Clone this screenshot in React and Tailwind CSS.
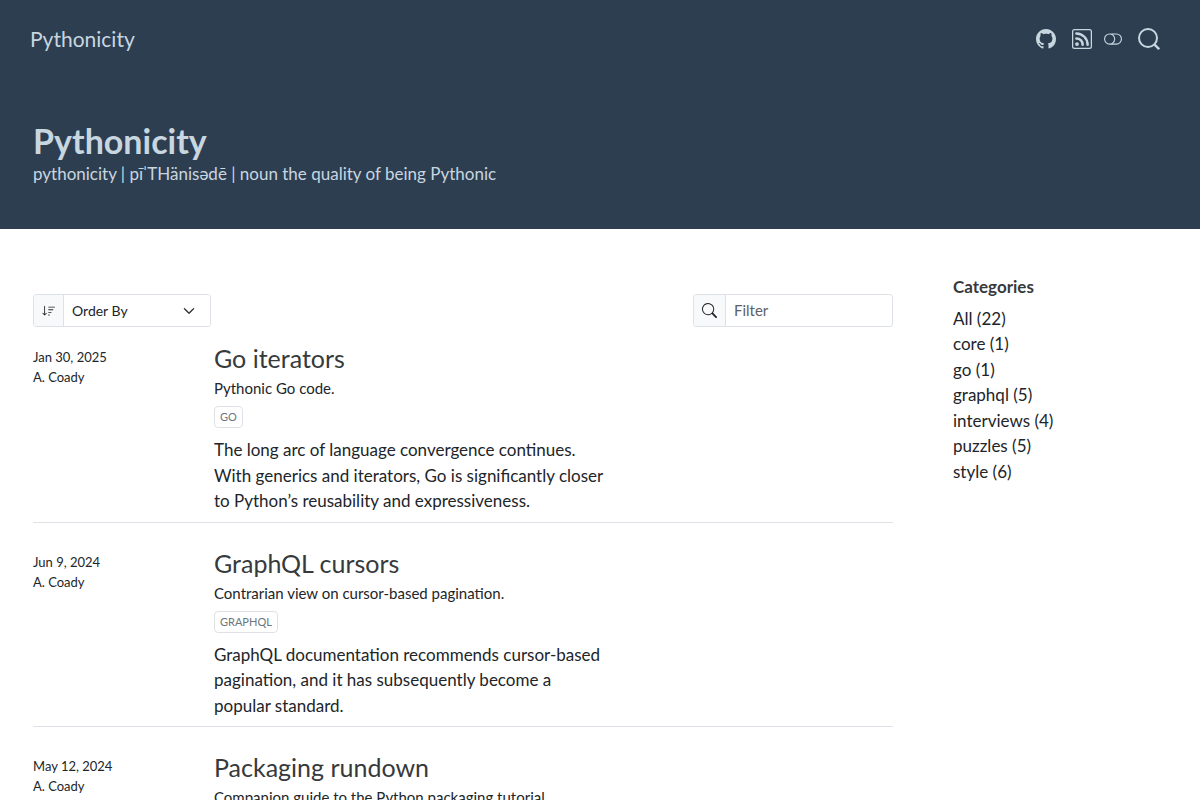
import React, { useState } from 'react';
import { BsGithub, BsToggleOff, BsSearch, BsSortDown, BsChevronDown } from 'react-icons/bs';

const posts = [
  {
    title: 'Go iterators',
    date: 'Jan 30, 2025',
    time: 20250130,
    author: 'A. Coady',
    description: 'Pythonic Go code.',
    category: 'go',
    summary:
      'The long arc of language convergence continues. With generics and iterators, Go is significantly closer to Python’s reusability and expressiveness.',
  },
  {
    title: 'GraphQL cursors',
    date: 'Jun 9, 2024',
    time: 20240609,
    author: 'A. Coady',
    description: 'Contrarian view on cursor-based pagination.',
    category: 'graphql',
    summary:
      'GraphQL documentation recommends cursor-based pagination, and it has subsequently become a popular standard.',
  },
  {
    title: 'Packaging rundown',
    date: 'May 12, 2024',
    time: 20240512,
    author: 'A. Coady',
    description: 'Companion guide to the Python packaging tutorial.',
  },
];

const categories = [
  { name: 'All', count: 22 },
  { name: 'core', count: 1 },
  { name: 'go', count: 1 },
  { name: 'graphql', count: 5 },
  { name: 'interviews', count: 4 },
  { name: 'puzzles', count: 5 },
  { name: 'style', count: 6 },
];

const Header = () => (
  <header className="bg-[#2d3e50] text-[#c8d6e0]">
    <nav className="flex h-[78px] items-center justify-between pl-[30px] pr-10">
      <a href="#" className="text-[21px] leading-8">Pythonicity</a>
      <div className="flex items-center">
        <a href="#github" aria-label="GitHub" className="mr-4">
          <BsGithub className="size-5" />
        </a>
        <a href="#rss" aria-label="RSS" className="mr-3">
          <svg viewBox="0 0 16 16" fill="currentColor" className="size-5">
            <path d="M14 1a1 1 0 0 1 1 1v12a1 1 0 0 1-1 1H2a1 1 0 0 1-1-1V2a1 1 0 0 1 1-1zM2 0a2 2 0 0 0-2 2v12a2 2 0 0 0 2 2h12a2 2 0 0 0 2-2V2a2 2 0 0 0-2-2z" />
            <path d="M5.5 12a1.5 1.5 0 1 1-3 0 1.5 1.5 0 0 1 3 0m-3-8.5a1 1 0 0 1 1-1c5.523 0 10 4.477 10 10a1 1 0 1 1-2 0 8 8 0 0 0-8-8 1 1 0 0 1-1-1m0 4a1 1 0 0 1 1-1 6 6 0 0 1 6 6 1 1 0 1 1-2 0 4 4 0 0 0-4-4 1 1 0 0 1-1-1" />
          </svg>
        </a>
        <button type="button" aria-label="Toggle dark mode" className="mr-4">
          <BsToggleOff className="size-[18px]" />
        </button>
        <button type="button" aria-label="Search">
          <svg viewBox="0 0 22 22" fill="none" stroke="currentColor" strokeWidth="2" className="size-[22px]">
            <circle cx="10" cy="10" r="9" />
            <path d="M16.3 16.3 21.2 21.2" strokeWidth="2.4" />
          </svg>
        </button>
      </div>
    </nav>
    <div className="px-[33px] pb-[43px] pt-[42px]">
      <h1 className="text-[34px] font-bold leading-[41px]">Pythonicity</h1>
      <p className="text-[17px] leading-[25px]">
        pythonicity | pīˈTHänisədē | noun the quality of being Pythonic
      </p>
    </div>
  </header>
);

const Post = ({ post }) => (
  <article className="grid grid-cols-[181px_minmax(0,390px)] border-b border-[#dee2e6] pb-2">
    <div className="pt-[3px] text-[13px] leading-5">
      <div>{post.date}</div>
      <div>{post.author}</div>
    </div>
    <div>
      <h3 className="text-[25px] leading-7 text-[#373a3c]">
        <a href="#post">{post.title}</a>
      </h3>
      <p className="mt-[5px] text-[15px] leading-[22px]">{post.description}</p>
      {post.category && (
        <button
          type="button"
          className="mt-[7px] block rounded border border-[#dee2e6] px-[5px] text-[11px] uppercase leading-5 text-[#6c757d]"
        >
          {post.category}
        </button>
      )}
      {post.summary && <p className="mt-[9px] text-[17px] leading-normal">{post.summary}</p>}
    </div>
  </article>
);

const App = () => {
  const [order, setOrder] = useState('');
  const [filter, setFilter] = useState('');

  const visible = posts.filter((p) =>
    `${p.title} ${p.description}`.toLowerCase().includes(filter.toLowerCase())
  );
  if (order === 'title') visible.sort((a, b) => a.title.localeCompare(b.title));
  if (order === 'oldest') visible.sort((a, b) => a.time - b.time);
  if (order === 'newest') visible.sort((a, b) => b.time - a.time);

  return (
    <div className="h-screen overflow-y-auto bg-white font-['Lato',sans-serif] text-[#212529] [scrollbar-width:none]">
      <Header />
      <div className="flex gap-[60px] px-[33px] pt-[45px]">
        <main className="min-w-0 flex-1 pt-5">
          <div className="flex items-center justify-between">
            <div className="flex h-[33px] w-[178px] overflow-hidden rounded-[3px] border border-[#dee2e6]">
              <label
                htmlFor="order"
                aria-label="Order By"
                className="flex w-[30px] shrink-0 items-center justify-center border-r border-[#dee2e6] bg-[#f8f9fa]"
              >
                <BsSortDown className="size-[14px]" />
              </label>
              <div className="relative flex-1">
                <select
                  id="order"
                  value={order}
                  onChange={(e) => setOrder(e.target.value)}
                  className="h-full w-full appearance-none bg-white pl-2 pr-8 text-[14px] outline-none"
                >
                  <option value="">Order By</option>
                  <option value="title">Title</option>
                  <option value="oldest">Date - Oldest</option>
                  <option value="newest">Date - Newest</option>
                </select>
                <BsChevronDown className="pointer-events-none absolute right-[15px] top-[10px] size-3 stroke-1" />
              </div>
            </div>
            <div className="flex h-[33px] w-[200px] overflow-hidden rounded-[3px] border border-[#dee2e6]">
              <label
                htmlFor="filter"
                aria-label="Filter"
                className="flex w-8 shrink-0 items-center justify-center border-r border-[#dee2e6] bg-[#f8f9fa]"
              >
                <BsSearch className="size-[15px]" />
              </label>
              <input
                id="filter"
                type="text"
                placeholder="Filter"
                value={filter}
                onChange={(e) => setFilter(e.target.value)}
                className="min-w-0 flex-1 px-2 text-[15px] outline-none placeholder:text-[#5c6166]"
              />
            </div>
          </div>
          <div className="mt-[17px] flex flex-col gap-[26px]">
            {visible.map((post) => (
              <Post key={post.title} post={post} />
            ))}
          </div>
        </main>
        <aside className="w-[214px] shrink-0 text-[17px] leading-normal">
          <h2 className="font-bold text-[#373a3c]">Categories</h2>
          <ul className="mt-[6px]">
            {categories.map((c) => (
              <li key={c.name}>
                <a href="#category">
                  {c.name} ({c.count})
                </a>
              </li>
            ))}
          </ul>
        </aside>
      </div>
    </div>
  );
};

export default App;
